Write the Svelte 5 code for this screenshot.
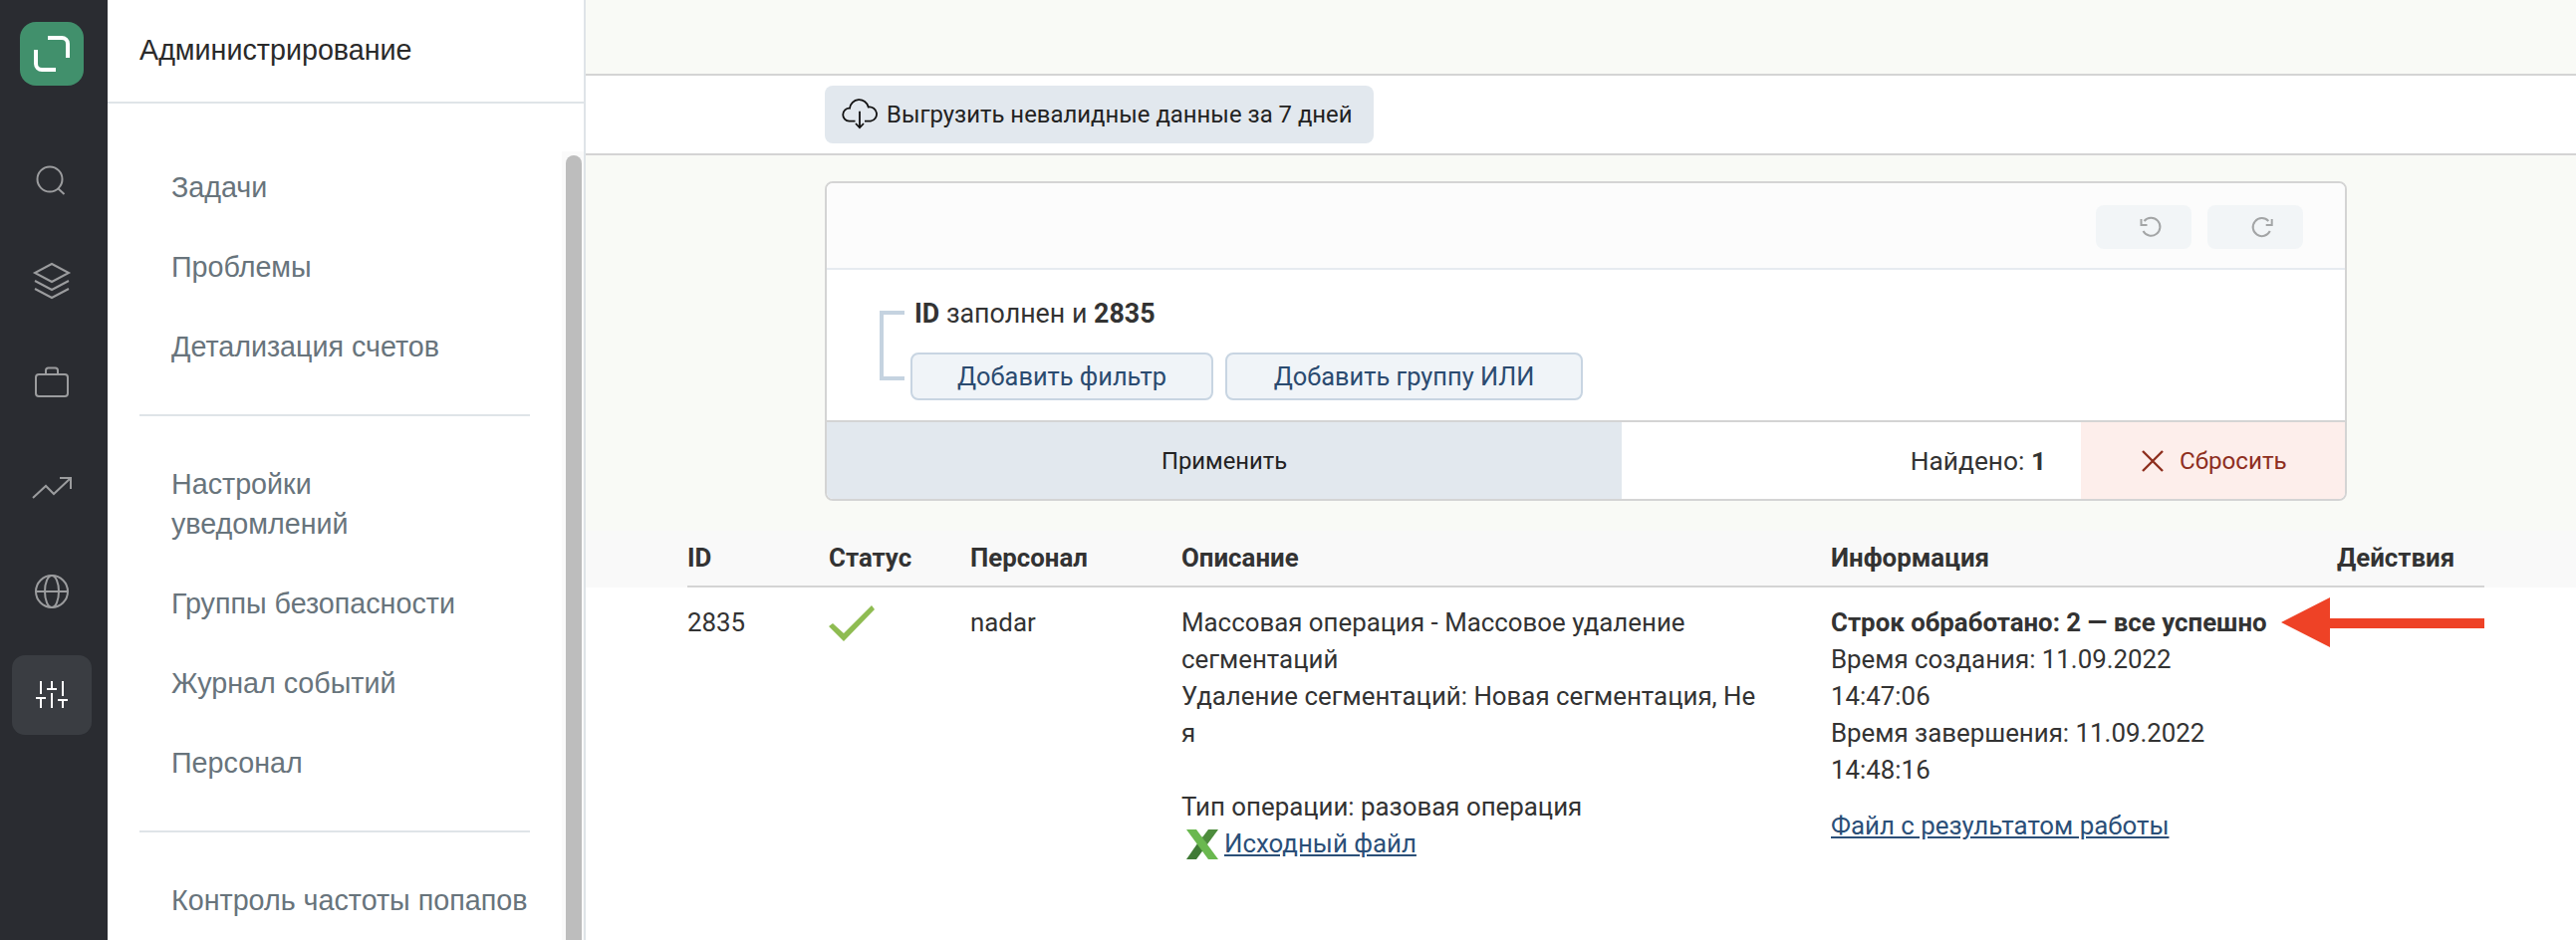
<script lang="ts">
	// ===== DATA =====
	const menuGroups = [
		['Задачи', 'Проблемы', 'Детализация счетов'],
		['Настройки\nуведомлений', 'Группы безопасности', 'Журнал событий', 'Персонал'],
		['Контроль частоты попапов']
	];
	const columns = ['ID', 'Статус', 'Персонал', 'Описание', 'Информация', 'Действия'];
</script>

<div class="page">
	<aside class="rail">
		<div class="logo">
			<svg width="64" height="64" viewBox="0 0 64 64" fill="none" stroke="#fff" stroke-width="4">
				<path d="M28 16H42a6 6 0 0 1 6 6V36" />
				<path d="M16 28V42a6 6 0 0 0 6 6H36" />
			</svg>
		</div>
		<svg class="rail-icons" width="108" height="640" viewBox="0 104 108 640" fill="none" stroke="#9b9c9e" stroke-width="2">
			<circle cx="50" cy="180" r="12.5" />
			<path d="M58.5 189.5 64.500 195" />
			<path d="M52 265 69 274 52 283 35 274Z" />
			<path d="M35 282 52 291 69 282M35 290 52 299 69 290" />
			<rect x="36" y="376" width="32" height="22" rx="3" />
			<path d="M46 376V372a2.500 2.500 0 0 1 2.500-2.500h7a2.500 2.500 0 0 1 2.500 2.500V376" />
			<path d="M33 500 46 488 54 496 71 480M60 480H71V491" />
			<circle cx="52" cy="594" r="16" />
			<ellipse cx="52" cy="594" rx="7" ry="16" />
			<path d="M36 594H68" />
			<rect x="12" y="658" width="80" height="80" rx="13" fill="#3a3d42" stroke="none" />
			<path stroke="#fff" d="M41 684V697M41 701V711M36 701H46M52 684V692M52 696V711M47 692H57M63 684V699M63 703V711M58 703H68" />
		</svg>
	</aside>

	<nav class="panel">
		<header class="panel-title">Администрирование</header>
		<div class="menu">
			{#each menuGroups as group, i}
				{#if i > 0}<hr class="divider" />{/if}
				<ul>
					{#each group as item}
						<li>{item}</li>
					{/each}
				</ul>
			{/each}
		</div>
		<div class="scroll-track"><div class="scroll-thumb"></div></div>
	</nav>

	<main class="main">
		<div class="top-band"></div>
		<div class="export-bar">
			<button class="export-btn">
				<svg width="36" height="32" viewBox="0 0 36 32" fill="none" stroke="#111" stroke-width="1.800">
					<path d="M13.500 22.700H7.500A6.500 6.500 0 0 1 8 9.700A9.500 9.500 0 0 1 26.700 8.500A7 7 0 0 1 29 22.700H23" />
					<path d="M18 12.700V29.300M14 25 18 29.300 22 25" />
				</svg>
				Выгрузить невалидные данные за 7 дней
			</button>
		</div>

		<section class="filter-card">
			<div class="card-toolbar">
				<button class="history-btn" aria-label="Отменить">
					<svg width="22" height="22" viewBox="0 0 22 22" fill="none" stroke="#a3a5a6" stroke-width="2">
						<path d="M4.500 5A9 9 0 1 1 3.500 15M1.500 3V9H7.500" />
					</svg>
				</button>
				<button class="history-btn" aria-label="Повторить">
					<svg width="22" height="22" viewBox="0 0 22 22" fill="none" stroke="#a3a5a6" stroke-width="2">
						<path d="M17.300 5A9 9 0 1 0 18.800 15M20.700 3V9H14.700" />
					</svg>
				</button>
			</div>
			<div class="card-body">
				<div class="bracket"></div>
				<div class="filter-group">
					<div class="filter-text"><b>ID</b> заполнен и <b>2835</b></div>
					<div class="filter-actions">
						<button class="add-btn add-filter">Добавить фильтр</button>
						<button class="add-btn add-group">Добавить группу ИЛИ</button>
					</div>
				</div>
			</div>
			<div class="card-footer">
				<button class="apply-btn">Применить</button>
				<div class="found">Найдено: <b>1</b></div>
				<button class="reset-btn">
					<svg width="24" height="24" viewBox="0 0 24 24" fill="none" stroke="#8e2f1e" stroke-width="2.400">
						<path d="M2 2 22 22M22 2 2 22" />
					</svg>
					Сбросить
				</button>
			</div>
		</section>

		<div class="table-head">
			<div class="grid head-row">
				{#each columns as column}
					<div>{column}</div>
				{/each}
			</div>
		</div>
		<div class="grid data-row">
			<div>2835</div>
			<div>
				<svg class="check" width="46" height="36" viewBox="0 0 46 36">
					<path fill="#8fbc52" d="M0 21 4 18 15 28 43 0 46 4 15 36Z" />
				</svg>
			</div>
			<div>nadar</div>
			<div>
				Массовая операция - Массовое удаление<br />
				сегментаций<br />
				Удаление сегментаций: Новая сегментация, Не<br />
				я<br />
				<br />
				Тип операции: разовая операция<br />
				<span class="file-line">
					<svg width="32" height="30" viewBox="0 0 32 30">
						<path fill="#3f7a35" d="M0 30H10L21 15 16 7Z" />
						<path fill="#4d8c3c" d="M22 0H32L21 15 16 8Z" />
						<path fill="#6ab84f" d="M0 0H10L32 30H22Z" />
					</svg>
					<a href="#file">Исходный файл</a>
				</span>
			</div>
			<div class="info">
				<b>Строк обработано: 2 — все успешно</b><br />
				Время создания: 11.09.2022<br />
				14:47:06<br />
				Время завершения: 11.09.2022<br />
				14:48:16<br />
				<a class="result-link" href="#result">Файл с результатом работы</a>
				<svg class="arrow" width="204" height="50" viewBox="0 0 204 50">
					<path fill="#ee4226" d="M0 25 49 0V21H204V31H49V50Z" />
				</svg>
			</div>
			<div></div>
		</div>
	</main>
</div>

<style>
	:global(body) {
		margin: 0;
		background: #fff;
	}

	.page {
		display: flex;
		width: 2586px;
		height: 944px;
		overflow: hidden;
		font-family: 'Roboto', 'Liberation Sans', sans-serif;
		font-size: 25.85px;
		color: #333;
	}

	/* rail */
	.rail {
		position: relative;
		flex: none;
		width: 108px;
		background: #2a2c31;
	}

	.logo {
		width: 64px;
		height: 64px;
		margin: 22px 0 0 20px;
		border-radius: 16px;
		background: #41906c;
	}

	.logo svg {
		display: block;
	}

	.rail-icons {
		display: block;
		margin-top: 18px;
	}

	/* panel */
	.panel {
		position: relative;
		flex: none;
		width: 478px;
		border-right: 2px solid #dfe4e8;
		font-family: 'Liberation Sans', sans-serif;
		font-size: 28.7px;
	}

	.panel-title {
		height: 102px;
		padding-left: 32px;
		line-height: 100px;
		color: #2a2a2a;
		border-bottom: 2px solid #dfe4e8;
	}

	.menu {
		padding: 44px 54px 0 32px;
	}

	.menu ul {
		margin: 0;
		padding: 0;
		list-style: none;
	}

	.menu li {
		padding: 20px 0 20px 32px;
		line-height: 40px;
		white-space: pre-line;
		color: #68747c;
	}

	.divider {
		height: 2px;
		margin: 28px 0;
		border: 0;
		background: #dfe4e8;
	}

	.scroll-track {
		position: absolute;
		top: 152px;
		right: 0;
		bottom: 0;
		width: 22px;
		background: #fafafa;
	}

	.scroll-thumb {
		width: 16px;
		height: 800px;
		margin: 4px 0 0 4px;
		border-radius: 8px;
		background: #bdbdbd;
	}

	/* main */
	.main {
		flex: 1;
		min-width: 0;
		background: #f9faf6;
	}

	.top-band {
		height: 74px;
		border-bottom: 2px solid #d4d4d4;
	}

	.export-bar {
		display: flex;
		box-sizing: border-box;
		height: 80px;
		padding: 10px 0 0 240px;
		background: #fff;
		border-bottom: 2px solid #d4d4d4;
	}

	button {
		font: inherit;
		color: inherit;
		border: 0;
		padding: 0;
	}

	.export-btn {
		display: flex;
		align-items: center;
		gap: 9px;
		width: 551px;
		height: 58px;
		padding-left: 17px;
		border-radius: 8px;
		background: #e2e8ee;
		color: #222;
		font-size: 23.9px;
		white-space: nowrap;
	}

	.filter-card {
		box-sizing: border-box;
		width: 1528px;
		height: 321px;
		margin: 26px 0 30px 240px;
		display: flex;
		flex-direction: column;
		background: #fff;
		border: 2px solid #d4d4d4;
		border-radius: 8px;
		overflow: hidden;
	}

	.card-toolbar {
		display: flex;
		justify-content: flex-end;
		gap: 16px;
		height: 87px;
		box-sizing: border-box;
		padding: 22px 42px 0 0;
		background: #fcfcfc;
		border-bottom: 2px solid #e6ebf0;
	}

	.history-btn {
		display: flex;
		align-items: center;
		justify-content: center;
		width: 96px;
		height: 44px;
		padding-left: 14px;
		border-radius: 8px;
		background: #f2f5f7;
	}

	.history-btn svg {
		overflow: visible;
	}

	.card-body {
		display: flex;
		height: 153px;
		box-sizing: border-box;
		padding: 41px 0 0 53px;
		border-bottom: 2px solid #d4d4d4;
	}

	.bracket {
		flex: none;
		box-sizing: border-box;
		width: 25px;
		height: 70px;
		border: 4px solid #c5d3e0;
		border-right: 0;
	}

	.filter-group {
		margin-left: 6px;
	}

	.filter-text {
		height: 42px;
		margin-left: 4px;
		margin-top: -14px;
		line-height: 34px;
		font-size: 26.8px;
		color: #333;
	}

	.filter-actions {
		display: flex;
		gap: 12px;
		margin-top: 14px;
	}

	.add-btn {
		height: 48px;
		box-sizing: border-box;
		border: 2px solid #c8d5e2;
		border-radius: 8px;
		background: #f0f4f8;
		color: #2b4b70;
		font-size: 25.4px;
		white-space: nowrap;
	}

	.add-filter {
		width: 304px;
	}

	.add-group {
		width: 359px;
	}

	.card-footer {
		display: flex;
		flex: 1;
		align-items: stretch;
	}

	.apply-btn {
		width: 798px;
		background: #e2e8ee;
		color: #222;
		font-size: 23.8px;
	}

	.found {
		flex: 1;
		align-self: center;
		padding-right: 35px;
		text-align: right;
		font-size: 26.3px;
	}

	.reset-btn {
		display: flex;
		align-items: center;
		gap: 15px;
		width: 265px;
		padding-left: 60px;
		background: #fdeeeb;
		color: #8e2f1e;
		font-size: 24.2px;
		white-space: nowrap;
	}

	/* table */
	.table-head {
		height: 57px;
		padding: 0 92px 0 102px;
		background: #f9f9f9;
	}

	.grid {
		display: grid;
		grid-template-columns: 142px 142px 212px 652px 508px 148px;
	}

	.head-row {
		height: 55px;
		line-height: 54px;
		font-weight: 700;
		border-bottom: 2px solid #d4d4d4;
	}

	.data-row {
		position: relative;
		height: 400px;
		padding: 17px 92px 0 102px;
		line-height: 37px;
		background: #fff;
	}

	.check {
		display: block;
		margin-top: 1px;
	}

	.file-line {
		display: inline-flex;
		align-items: center;
		gap: 6px;
		margin-left: 5px;
	}

	a {
		color: #2b4f78;
	}

	.info {
		position: relative;
	}

	.result-link {
		display: block;
		margin-top: 19px;
	}

	.arrow {
		position: absolute;
		top: -7px;
		left: 452px;
	}
</style>
